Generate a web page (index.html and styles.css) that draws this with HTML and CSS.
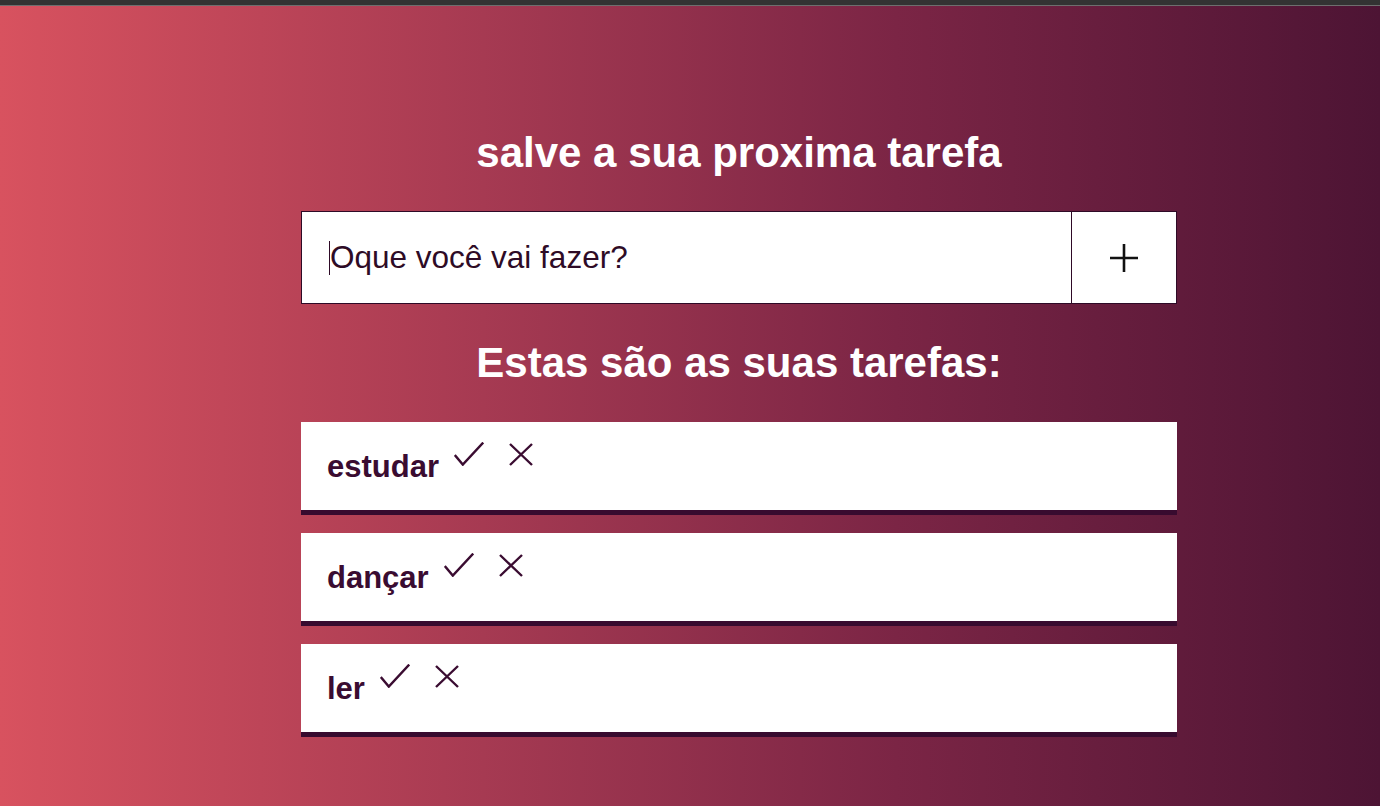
FILE: index.html
```html
<!DOCTYPE html>
<html lang="pt-BR">
<head>
<meta charset="utf-8">
<title>Tarefas</title>
<link rel="stylesheet" href="styles.css">
</head>
<body>
<div class="topbar"></div>
<main class="page">
  <section class="todo">
    <h1 class="title">salve a sua proxima tarefa</h1>
    <form class="add-form">
      <div class="field"><span class="caret"></span><span class="placeholder">Oque você vai fazer?</span></div>
      <button class="add-btn" type="button" aria-label="adicionar">
        <svg width="28" height="28" viewBox="0 0 28 28"><path d="M14 0V28M0 14H28" stroke="#111" stroke-width="2.6" fill="none"/></svg>
      </button>
    </form>
    <h2 class="title">Estas são as suas tarefas:</h2>
    <ul class="tasks">
      <li class="task"><span class="task-name">estudar</span>
        <svg class="ic-check" width="30" height="24" viewBox="0 0 30 24"><path d="M0.8 13L8.8 22.6L29.2 0.6" stroke="#3a0c31" stroke-width="2.4" fill="none"/></svg>
        <svg class="ic-x" width="24" height="23" viewBox="0 0 24 23"><path d="M1 1L23 22M23 1L1 22" stroke="#3a0c31" stroke-width="2.4" fill="none"/></svg>
      </li>
      <li class="task"><span class="task-name">dançar</span>
        <svg class="ic-check" width="30" height="24" viewBox="0 0 30 24"><path d="M0.8 13L8.8 22.6L29.2 0.6" stroke="#3a0c31" stroke-width="2.4" fill="none"/></svg>
        <svg class="ic-x" width="24" height="23" viewBox="0 0 24 23"><path d="M1 1L23 22M23 1L1 22" stroke="#3a0c31" stroke-width="2.4" fill="none"/></svg>
      </li>
      <li class="task"><span class="task-name">ler</span>
        <svg class="ic-check" width="30" height="24" viewBox="0 0 30 24"><path d="M0.8 13L8.8 22.6L29.2 0.6" stroke="#3a0c31" stroke-width="2.4" fill="none"/></svg>
        <svg class="ic-x" width="24" height="23" viewBox="0 0 24 23"><path d="M1 1L23 22M23 1L1 22" stroke="#3a0c31" stroke-width="2.4" fill="none"/></svg>
      </li>
    </ul>
  </section>
</main>
</body>
</html>
```

FILE: styles.css
```css
* { box-sizing: border-box; }

html, body {
  margin: 0;
  padding: 0;
  height: 100%;
}

body {
  font-family: "Liberation Sans", Arial, sans-serif;
  background: linear-gradient(to right, #d8525f 0%, #a63a52 35%, #7b2545 65%, #4d1434 100%);
  min-height: 806px;
  overflow: hidden;
}

.topbar {
  height: 6px;
  background: #333333;
  border-bottom: 1px solid #6e6e6e;
}

.page {
  display: flex;
  justify-content: center;
  padding: 123px 0 0 98px;
}

.todo {
  width: 876px;
  display: flex;
  flex-direction: column;
}

.title {
  margin: 0;
  font-size: 42px;
  line-height: 48px;
  font-weight: bold;
  color: #ffffff;
  text-align: center;
}

h1.title { margin-bottom: 34px; }
h2.title { margin-top: 35px; margin-bottom: 35px; }

.add-form {
  display: flex;
  height: 93px;
  margin: 0;
}

.field {
  flex: 1;
  display: flex;
  align-items: center;
  background: #ffffff;
  border: 1px solid #2e0a27;
  padding-left: 27px;
}

.caret {
  width: 1px;
  height: 34px;
  background: #2e0a27;
}

.placeholder {
  font-size: 31.5px;
  color: #2e0b26;
  line-height: 35px;
}

.add-btn {
  width: 105px;
  background: #ffffff;
  border: 1px solid #2e0a27;
  border-left: none;
  display: flex;
  align-items: center;
  justify-content: center;
  padding: 0;
  margin: 0;
  cursor: pointer;
}

.add-btn svg { display: block; margin-left: -1px; }

.tasks {
  list-style: none;
  margin: 0;
  padding: 0;
  display: flex;
  flex-direction: column;
  gap: 18px;
}

.task {
  display: flex;
  align-items: flex-start;
  background: #ffffff;
  border-bottom: 5px solid #380b2f;
  height: 93px;
  padding: 20px 26px 0;
}

.task-name {
  font-size: 31px;
  font-weight: bold;
  line-height: 49px;
  color: #3a0c31;
}

.ic-check {
  display: block;
  margin-left: 15px;
}

.ic-x {
  display: block;
  margin-left: 25px;
  margin-top: 1px;
}
```
